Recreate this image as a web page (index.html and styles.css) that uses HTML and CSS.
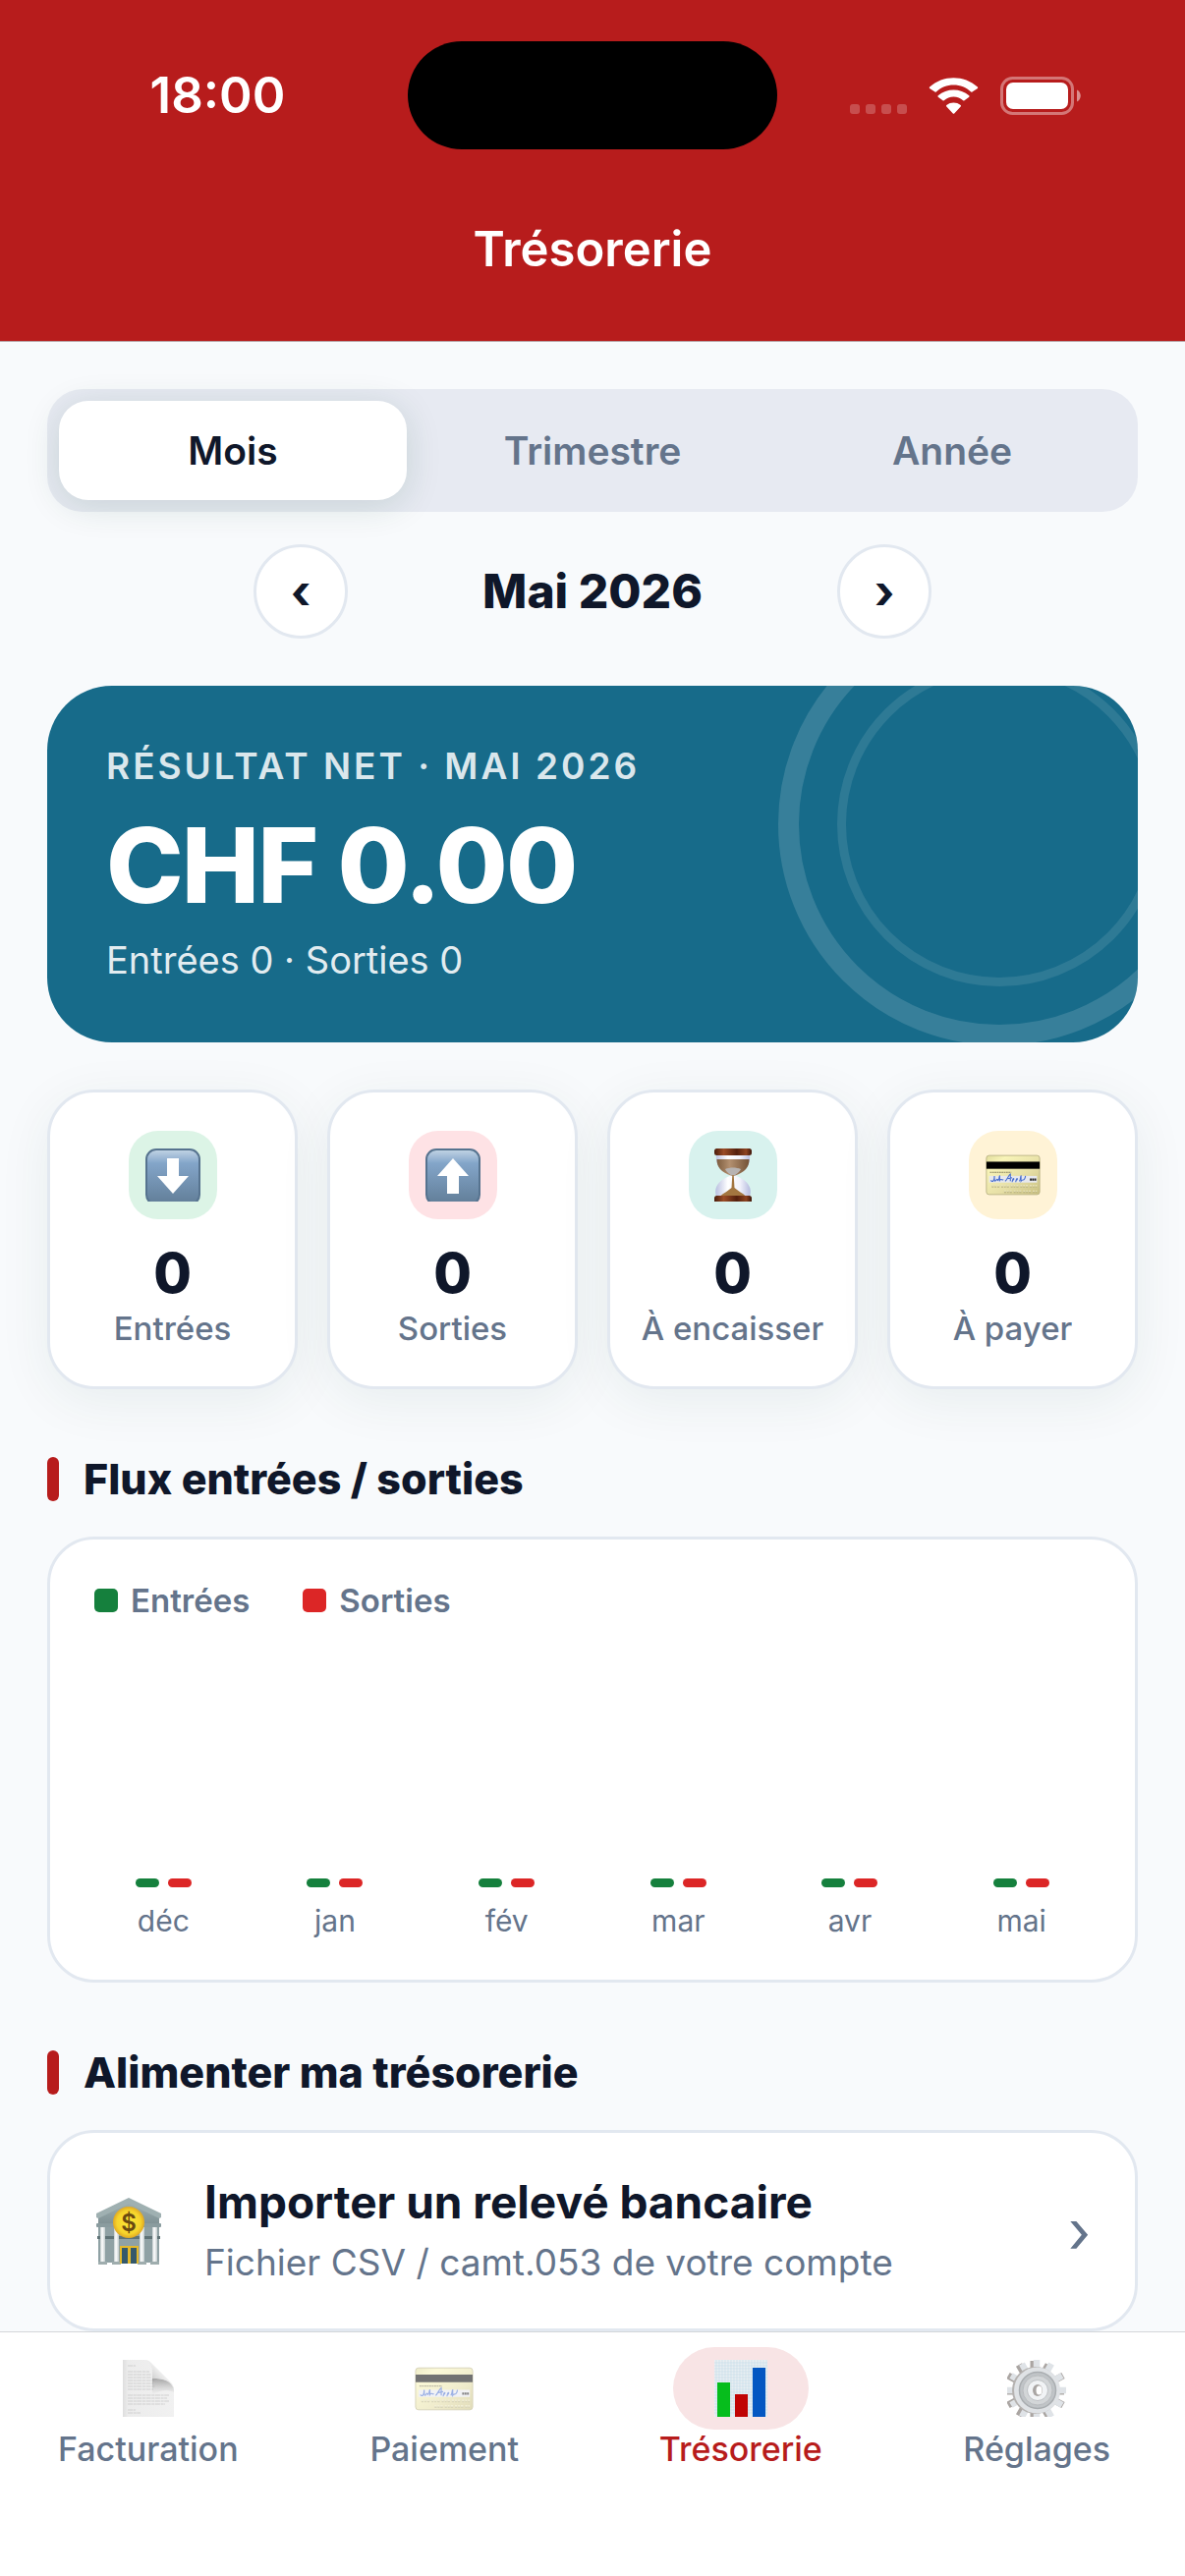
FILE: index.html
```html
<!DOCTYPE html>
<html lang="fr">
<head>
<meta charset="utf-8">
<meta name="viewport" content="width=device-width, initial-scale=1">
<title>Trésorerie</title>
<link rel="stylesheet" href="styles.css">
</head>
<body>
<svg class="defs" aria-hidden="true">
  <defs>
    <linearGradient id="tileGrad" x1="0" y1="0" x2="0" y2="1">
      <stop offset="0" stop-color="#c3d5e5"/><stop offset=".25" stop-color="#83a5c9"/><stop offset="1" stop-color="#617d97"/>
    </linearGradient>
    <linearGradient id="cardGrad" x1="0" y1="0" x2="1" y2="1">
      <stop offset="0" stop-color="#e0dc9c"/><stop offset=".2" stop-color="#f8f4b8"/><stop offset=".6" stop-color="#e6dfa6"/><stop offset="1" stop-color="#c9c080"/>
    </linearGradient>
    <linearGradient id="woodGrad" x1="0" y1="0" x2="1" y2="0">
      <stop offset="0" stop-color="#4a1c0c"/><stop offset=".25" stop-color="#9a4c26"/><stop offset=".6" stop-color="#54200d"/><stop offset=".85" stop-color="#8d4320"/><stop offset="1" stop-color="#3e160a"/>
    </linearGradient>
    <linearGradient id="sandGrad" x1="0" y1="0" x2="1" y2="0">
      <stop offset="0" stop-color="#7d5d3f"/><stop offset=".4" stop-color="#b39070"/><stop offset="1" stop-color="#735236"/>
    </linearGradient>
    <linearGradient id="glassGrad" x1="0" y1="0" x2="1" y2="0">
      <stop offset="0" stop-color="#b9bfe0"/><stop offset=".35" stop-color="#ffffff"/><stop offset=".7" stop-color="#f2f3fb"/><stop offset="1" stop-color="#b4bade"/>
    </linearGradient>
    <linearGradient id="pageGrad" x1="0" y1="0" x2="1" y2="0">
      <stop offset="0" stop-color="#dedede"/><stop offset=".1" stop-color="#ececec"/><stop offset="1" stop-color="#f1f1f1"/>
    </linearGradient>
    <linearGradient id="foldGrad" x1="0" y1=".9" x2=".6" y2=".3">
      <stop offset="0" stop-color="#9c9c9c"/><stop offset=".55" stop-color="#d8d8d8"/><stop offset="1" stop-color="#f8f8f8"/>
    </linearGradient>
    <linearGradient id="shadeGrad" x1="0" y1="0" x2="0" y2="1">
      <stop offset="0" stop-color="#8c8c8c" stop-opacity=".75"/><stop offset="1" stop-color="#b0b0b0" stop-opacity="0"/>
    </linearGradient>
    <linearGradient id="stoneGrad" x1="0" y1="0" x2="0" y2="1">
      <stop offset="0" stop-color="#a3b3b5"/><stop offset="1" stop-color="#7f9194"/>
    </linearGradient>
    <linearGradient id="pillarGrad" x1="0" y1="0" x2="1" y2="0">
      <stop offset="0" stop-color="#c3cccd"/><stop offset=".4" stop-color="#ffffff"/><stop offset="1" stop-color="#c3cccd"/>
    </linearGradient>
    <radialGradient id="coinGrad">
      <stop offset="0" stop-color="#ffe937"/><stop offset=".75" stop-color="#f6d32b"/><stop offset="1" stop-color="#e0a823"/>
    </radialGradient>
    <symbol id="creditCard" viewBox="0 0 62 46">
      <rect x="1" y="1" width="60" height="44" rx="3" fill="url(#cardGrad)" stroke="#b8b182" stroke-width="1"/>
      <rect x="1" y="8" width="60" height="8" fill="#000"/>
      <path d="M5 20h24" stroke="#8b8660" stroke-width="1.200" stroke-dasharray="2 .6"/>
      <rect x="4" y="24" width="54" height="7.500" fill="#e6e8ee"/>
      <path d="M6 29c2 3 4 0 4-5 0 5 0 7 2 5 1-2 2-1 2 0 2-1 1-5 2-5v5c2-3 3 1 4-1m2 2c2-1 4-7 6-8v8m-3-3 5-1m0 5c1-6 3-4 1-2m3 2c1-6 3-4 1-2m3 1c2-2 1-6 2-6v6c2-3 4 1 5-6" fill="none" stroke="#4a70cf" stroke-width="1.200"/>
      <path d="M50 28h7" stroke="#222" stroke-width="2.500" stroke-dasharray="2 .5"/>
      <path d="M7 36h51M21 42h37" stroke="#bdb684" stroke-width="2.500" stroke-dasharray="2.200 1 2 1 2.500 2"/>
      <path d="M7 35h51M21 41h37" stroke="#f1ecc4" stroke-width="1.200" stroke-dasharray="2.200 1 2 1 2.500 2"/>
    </symbol>
  </defs>
</svg>

<header class="top">
  <div class="status">
    <time class="clock">18:00</time>
    <div class="island"></div>
    <div class="signals">
      <svg class="dots" viewBox="0 0 58 10" aria-hidden="true"><g fill="#fff" opacity=".22"><rect width="10" height="10" rx="3"/><rect x="16" width="10" height="10" rx="3"/><rect x="32" width="10" height="10" rx="3"/><rect x="48" width="10" height="10" rx="3"/></g></svg>
      <svg class="wifi" viewBox="0 0 51 37" aria-hidden="true"><g fill="#fff"><path d="M25.500 7.500c6.800 0 13 2.600 17.700 7 .4.400 1 .3 1.300 0l5.400-3.500c.4-.4.400-1 0-1.400C36.400-3 14.600-3 1.100 9.600c-.4.400-.4 1 0 1.400l5.400 3.500c.3.300.9.400 1.300 0 4.700-4.400 10.900-7 17.700-7z"/><path d="M25.500 19.500c3.700 0 7.100 1.400 9.700 3.700.4.400 1 .4 1.300 0l4.800-3.500c.4-.4.400-1 0-1.400-9-7.600-22.600-7.600-31.600 0-.4.400-.4 1 0 1.400l4.800 3.500c.3.400.9.400 1.300 0 2.600-2.300 6-3.700 9.700-3.700z"/><path d="M32.700 28c.4.400.4 1 0 1.400l-6.500 7.100c-.4.400-1 .4-1.400 0l-6.500-7.100c-.4-.4-.4-1 0-1.400 4.200-3.300 10.200-3.300 14.400 0z"/></g></svg>
      <svg class="battery" viewBox="0 0 82 39" aria-hidden="true"><rect x="1.500" y="1.500" width="72" height="36" rx="11" fill="none" stroke="#fff" stroke-opacity=".4" stroke-width="3"/><rect x="6" y="6" width="63" height="27" rx="7" fill="#fff"/><path d="M78 13.500c5 2 5 10 0 12z" fill="#fff" opacity=".5"/></svg>
    </div>
  </div>
  <h1 class="title">Trésorerie</h1>
</header>

<main class="content">
  <div class="segments" role="group" aria-label="Période">
    <button class="segment segment-on" type="button" aria-pressed="true">Mois</button>
    <button class="segment" type="button" aria-pressed="false">Trimestre</button>
    <button class="segment" type="button" aria-pressed="false">Année</button>
  </div>

  <div class="period">
    <button class="round" type="button" aria-label="Mois précédent">‹</button>
    <span class="period-name">Mai 2026</span>
    <button class="round" type="button" aria-label="Mois suivant">›</button>
  </div>

  <section class="hero">
    <span class="ring ring-big"></span>
    <span class="ring ring-small"></span>
    <p class="hero-label">RÉSULTAT NET · MAI 2026</p>
    <p class="hero-amount">CHF 0.00</p>
    <p class="hero-sub">Entrées 0 · Sorties 0</p>
  </section>

  <div class="stats">
    <div class="stat">
      <div class="tile tile-green"><svg class="emoji" viewBox="0 0 56 54" aria-hidden="true"><rect x="1" y="1" width="54" height="56" rx="10" fill="url(#tileGrad)" stroke="#56738f" stroke-width="2"/><path d="M22 10h12v18h10L28 46 12 28h10z" fill="#fff"/></svg></div>
      <strong class="stat-value">0</strong>
      <span class="stat-name">Entrées</span>
    </div>
    <div class="stat">
      <div class="tile tile-red"><svg class="emoji" viewBox="0 0 56 54" aria-hidden="true"><rect x="1" y="1" width="54" height="56" rx="10" fill="url(#tileGrad)" stroke="#56738f" stroke-width="2"/><path d="M22 46h12V28h10L28 10 12 28h10z" fill="#fff"/></svg></div>
      <strong class="stat-value">0</strong>
      <span class="stat-name">Sorties</span>
    </div>
    <div class="stat">
      <div class="tile tile-teal"><svg class="emoji" viewBox="0 0 56 54" aria-hidden="true"><path d="M11 6h34c1 10-3 17-15 21.500C43 32 48 40 45 49H11c-3-9 2-17 15-21.500C14 23 10 16 11 6z" fill="url(#glassGrad)"/><path d="M11.500 11h33c0 8-4 13-15.500 17h-2C15.500 24 11.500 19 11.500 11z" fill="url(#sandGrad)"/><path d="M20 21c5-2 11-2 16 0-1 3-5 5-7 7h-2c-2-2-6-4-7-7z" fill="#b7b3b2"/><path d="M27.300 27h1.400l.8 13c3 3 8 5 12 9h-27c4-4 9-6 12-9z" fill="#a37640"/><rect x="9" y="0" width="38" height="7" rx="2.500" fill="url(#woodGrad)"/><rect x="9" y="48" width="38" height="8" rx="2.500" fill="url(#woodGrad)"/></svg></div>
      <strong class="stat-value">0</strong>
      <span class="stat-name">À encaisser</span>
    </div>
    <div class="stat">
      <div class="tile tile-amber"><svg class="emoji emoji-card" aria-hidden="true"><use href="#creditCard"/></svg></div>
      <strong class="stat-value">0</strong>
      <span class="stat-name">À payer</span>
    </div>
  </div>

  <h2 class="heading">Flux entrées / sorties</h2>
  <section class="chart">
    <div class="legend">
      <span class="key"><i class="swatch in"></i>Entrées</span>
      <span class="key"><i class="swatch out"></i>Sorties</span>
    </div>
    <div class="months">
      <div class="month"><div class="bars"><i class="bar in"></i><i class="bar out"></i></div>déc</div>
      <div class="month"><div class="bars"><i class="bar in"></i><i class="bar out"></i></div>jan</div>
      <div class="month"><div class="bars"><i class="bar in"></i><i class="bar out"></i></div>fév</div>
      <div class="month"><div class="bars"><i class="bar in"></i><i class="bar out"></i></div>mar</div>
      <div class="month"><div class="bars"><i class="bar in"></i><i class="bar out"></i></div>avr</div>
      <div class="month"><div class="bars"><i class="bar in"></i><i class="bar out"></i></div>mai</div>
    </div>
  </section>

  <h2 class="heading">Alimenter ma trésorerie</h2>
  <a class="action" href="#import">
    <svg class="bank" viewBox="0 0 68 68" aria-hidden="true"><rect x="4" y="28" width="62" height="38" fill="#8fa1a4"/><rect x="3" y="39" width="64" height="3" fill="#5f7376"/><path d="M35 2 66 17v10H4V17z" fill="url(#stoneGrad)"/><path d="M35 0 68 16v4l-2 1L35 6 4 21l-2-1v-4z" fill="#9fb0b1"/><rect x="2" y="26" width="66" height="4" rx="1" fill="#8a9c9f"/><g fill="url(#pillarGrad)"><rect x="6" y="30" width="5" height="36"/><rect x="20" y="30" width="5" height="36"/><rect x="46" y="30" width="5" height="36"/><rect x="59" y="30" width="5" height="36"/></g><g fill="#9fadae"><rect x="4" y="65" width="9" height="3"/><rect x="18" y="65" width="9" height="3"/><rect x="44" y="65" width="9" height="3"/><rect x="57" y="65" width="9" height="3"/></g><rect x="26" y="49" width="19" height="18" fill="#e3b92c"/><path d="M28 51h6v16h-6zM37 51h6v16h-6z" fill="#35596a"/><circle cx="35" cy="25" r="16" fill="url(#coinGrad)"/><text x="35" y="34" text-anchor="middle" font-family="Inter, sans-serif" font-weight="600" font-size="24" fill="#6b4a10">$</text></svg>
    <span class="action-text">
      <span class="action-title">Importer un relevé bancaire</span>
      <span class="action-sub">Fichier CSV / camt.053 de votre compte</span>
    </span>
    <span class="chevron" aria-hidden="true">›</span>
  </a>
</main>

<nav class="tabs" aria-label="Navigation principale">
  <a class="tab" href="#facturation">
    <span class="pill"><svg class="tab-icon" viewBox="0 0 60 58" aria-hidden="true"><path d="M4 0h22c8 2 8 9 8 19 10 0 20 0 22 11v28H4z" fill="url(#pageGrad)"/><path d="M9 6h8M9 12h22M9 15h24M9 18h24M9 21h27M9 24h26M9 27h28M9 30h26M9 36h42M9 39h40M9 42h42M9 45h38M9 51h8M9 54h13" stroke="#cfcfcf" stroke-width="1.200" stroke-dasharray="5 .7 3 .6"/><path d="M34 19c10 0 20 1 22 11v3c-7-3-14-2-22 2z" fill="url(#shadeGrad)"/><path d="M26 0c3 0 5 1 7 3l20 20c2 3 3 5 3 8-2-10-11-12-22-12 0-10 0-16-8-19z" fill="url(#foldGrad)"/></svg></span>
    Facturation
  </a>
  <a class="tab" href="#paiement">
    <span class="pill"><svg class="tab-icon tab-card" aria-hidden="true"><use href="#creditCard"/></svg></span>
    Paiement
  </a>
  <a class="tab tab-on" href="#tresorerie" aria-current="page">
    <span class="pill"><svg class="tab-icon" viewBox="0 0 60 58" aria-hidden="true"><rect x="3" width="54" height="58" fill="#eaeff3"/><path d="M5 0v58M8 0v58M11 0v58M14 0v58M17 0v58M20 0v58M23 0v58M26 0v58M29 0v58M32 0v58M35 0v58M38 0v58M41 0v58M44 0v58M47 0v58M50 0v58M53 0v58M56 0v58M3 3h54M3 6h54M3 9h54M3 12h54M3 15h54M3 18h54M3 21h54M3 24h54M3 27h54M3 30h54M3 33h54M3 36h54M3 39h54M3 42h54M3 45h54M3 48h54M3 51h54M3 54h54" stroke="#c3dcea" stroke-width=".6"/><path d="M6 23h13v35H6z" fill="#06bd1c"/><path d="M24 35h13v23H24z" fill="#c00404"/><path d="M42 8h13v50H42z" fill="#0457c2"/></svg></span>
    Trésorerie
  </a>
  <a class="tab" href="#reglages">
    <span class="pill"><svg class="tab-icon" viewBox="0 0 60 58" aria-hidden="true"><path d="M27 1v60M58 32H-2M12 5l30 52M42 5 12 57M1 16l56 30M57 16 1 46" stroke="#aaa5a2" stroke-width="7"/><path d="M30 0v62M61 31H-1M15 4l30 54M45 4 15 58M4 16l52 30M56 16 4 46" stroke="#dfe3e7" stroke-width="6.500"/><circle cx="29" cy="31" r="24" fill="#b5b2b0"/><circle cx="30.500" cy="31" r="23.500" fill="#dfe2e5"/><circle cx="31" cy="31" r="18.500" fill="#c0c4c7" stroke="#a9adb0" stroke-width="1.500"/><circle cx="31" cy="31" r="15" fill="#d3d6d8" stroke="#b9bcbf" stroke-width="1"/><circle cx="31" cy="31" r="10.500" fill="#f1f3f5" stroke="#bfc2c5" stroke-width="1"/><ellipse cx="31" cy="31" rx="5" ry="6" fill="#a9a5a3"/><ellipse cx="32.500" cy="31" rx="3" ry="4.500" fill="#fff"/></svg></span>
    Réglages
  </a>
</nav>
</body>
</html>
```
FILE: styles.css
```css
* {
  box-sizing: border-box;
}

body {
  margin: 0;
  min-height: 100vh;
  display: flex;
  flex-direction: column;
  background: #f8fafc;
  color: #0f172a;
  font-family: Inter, "Liberation Sans", sans-serif;
}

h1,
h2,
p {
  margin: 0;
}

button {
  font-family: inherit;
  color: inherit;
  border: 0;
  padding: 0;
}

a {
  color: inherit;
  text-decoration: none;
}

svg {
  display: block;
  flex: none;
}

.defs {
  position: absolute;
  width: 0;
  height: 0;
}

/* Header */

.top {
  background: #b71c1c;
  border-bottom: 1px solid #b9a5a8;
  color: #fff;
  padding-top: 42px;
}

.status {
  display: grid;
  grid-template-columns: 1fr 376px 1fr;
  align-items: center;
}

.clock {
  font-size: 51px;
  line-height: 60px;
  font-weight: 600;
  padding-left: 28px;
  text-align: center;
}

.island {
  height: 110px;
  border-radius: 55px;
  background: #000;
}

.signals {
  display: flex;
  align-items: center;
  justify-content: flex-end;
  gap: 22px;
  padding-right: 106px;
}

.dots {
  width: 58px;
  height: 10px;
  margin-top: 28px;
}

.wifi {
  width: 51px;
  height: 37px;
}

.battery {
  width: 82px;
  height: 39px;
}

.title {
  font-size: 49px;
  line-height: 60px;
  font-weight: 600;
  text-align: center;
  padding: 72px 0 63px;
}

/* Content */

.content {
  flex: 1;
  display: flex;
  flex-direction: column;
  padding: 48px 48px 0;
}

.segments {
  display: grid;
  grid-template-columns: repeat(3, 1fr);
  gap: 12px;
  padding: 12px;
  border-radius: 36px;
  background: #e7eaf2;
}

.segment {
  height: 101px;
  border-radius: 30px;
  background: transparent;
  color: #64748b;
  font-size: 39px;
  font-weight: 600;
}

.segment-on {
  background: #fff;
  color: #0f172a;
  box-shadow: 0 6px 36px rgba(15, 70, 50, 0.14);
}

.period {
  display: flex;
  align-items: center;
  justify-content: center;
  padding: 33px 0 48px;
}

.round {
  width: 96px;
  height: 96px;
  border: 3px solid #e2e8f0;
  border-radius: 50%;
  background: #fff;
  font-size: 48px;
  line-height: 60px;
  font-weight: 700;
}

.period-name {
  width: 498px;
  text-align: center;
  font-size: 48px;
  line-height: 60px;
  font-weight: 800;
}

.hero {
  position: relative;
  overflow: hidden;
  padding: 60px;
  border-radius: 66px;
  background: #176b8a;
  color: #fff;
}

.ring {
  position: absolute;
  border-radius: 50%;
}

.ring-big {
  top: -84px;
  right: -84px;
  width: 450px;
  height: 450px;
  border: 21px solid rgba(255, 255, 255, 0.14);
}

.ring-small {
  top: -24px;
  right: -24px;
  width: 330px;
  height: 330px;
  border: 9px solid rgba(255, 255, 255, 0.1);
}

.hero-label {
  font-size: 37px;
  line-height: 44px;
  font-weight: 600;
  letter-spacing: 3px;
  color: rgba(255, 255, 255, 0.86);
}

.hero-amount {
  font-size: 106px;
  line-height: 128px;
  font-weight: 800;
  letter-spacing: -2px;
  margin-top: 15px;
}

.hero-sub {
  font-size: 38px;
  line-height: 48px;
  margin-top: 8px;
  color: rgba(255, 255, 255, 0.9);
}

.stats {
  display: grid;
  grid-template-columns: repeat(4, 1fr);
  gap: 30px;
  padding-top: 48px;
}

.stat {
  display: flex;
  flex-direction: column;
  align-items: center;
  padding: 39px 0 38px;
  border: 3px solid #e2e8f0;
  border-radius: 48px;
  background: #fff;
  box-shadow: 0 12px 54px rgba(15, 70, 50, 0.07);
}

.tile {
  width: 90px;
  height: 90px;
  display: grid;
  place-items: center;
  border-radius: 30px;
}

.tile-green { background: #dcf4e6; }
.tile-red { background: #fee2e5; }
.tile-teal { background: #d8f2ee; }
.tile-amber { background: #fff3d6; }

.emoji {
  width: 56px;
  height: 54px;
}

.emoji-card {
  height: 42px;
}

.stat-value {
  font-size: 56px;
  line-height: 69px;
  font-weight: 800;
  margin-top: 21px;
}

.stat-name {
  font-size: 33px;
  line-height: 42px;
  font-weight: 500;
  color: #64748b;
}

.heading {
  display: flex;
  align-items: center;
  gap: 25px;
  padding: 63px 0 31px;
  font-size: 43px;
  line-height: 56px;
  font-weight: 800;
}

.heading::before {
  content: "";
  width: 12px;
  height: 45px;
  border-radius: 6px;
  background: #b71c1c;
}

.chart {
  display: flex;
  flex-direction: column;
  border: 3px solid #e2e8f0;
  border-radius: 48px;
  background: #fff;
  padding: 41px 28px;
}

.legend {
  display: flex;
  gap: 54px;
  padding-left: 17px;
  font-size: 33px;
  line-height: 42px;
  font-weight: 600;
  color: #64748b;
}

.key {
  display: flex;
  align-items: center;
  gap: 13px;
}

.swatch {
  width: 24px;
  height: 24px;
  border-radius: 5px;
}

.in { background: #15803d; }
.out { background: #dc2626; }

.months {
  display: grid;
  grid-template-columns: repeat(6, 1fr);
}

.month {
  text-align: center;
  font-size: 30px;
  line-height: 38px;
  color: #64748b;
}

.bars {
  height: 271px;
  display: flex;
  align-items: flex-end;
  justify-content: center;
  gap: 9px;
  margin-bottom: 15px;
}

.bar {
  width: 24px;
  height: 9px;
  border-radius: 5px;
}

.action {
  display: flex;
  align-items: center;
  gap: 44px;
  padding: 39px 45px;
  border: 3px solid #e2e8f0;
  border-radius: 48px;
  background: #fff;
}

.bank {
  width: 68px;
  height: 68px;
}

.action-text {
  flex: 1;
  display: flex;
  flex-direction: column;
  gap: 3px;
}

.action-title {
  font-size: 46px;
  line-height: 62px;
  font-weight: 700;
}

.action-sub {
  font-size: 37px;
  line-height: 56px;
  color: #64748b;
}

.chevron {
  font-size: 60px;
  line-height: 60px;
  color: #64748b;
}

/* Tab bar */

.tabs {
  display: grid;
  grid-template-columns: repeat(4, 1fr);
  padding: 15px 0 109px;
  border-top: 1px solid #d3d6da;
  background: #fff;
}

.tab {
  display: flex;
  flex-direction: column;
  align-items: center;
  font-size: 34px;
  line-height: 40px;
  font-weight: 500;
  color: #64748b;
}

.tab-on {
  color: #b71c1c;
}

.pill {
  width: 138px;
  height: 84px;
  display: grid;
  place-items: center;
  border-radius: 42px;
}

.tab-on .pill {
  background: #f8e4e5;
}

.tab-icon {
  width: 60px;
  height: 58px;
}

.tab-card {
  height: 47px;
  opacity: 0.55;
}
```
